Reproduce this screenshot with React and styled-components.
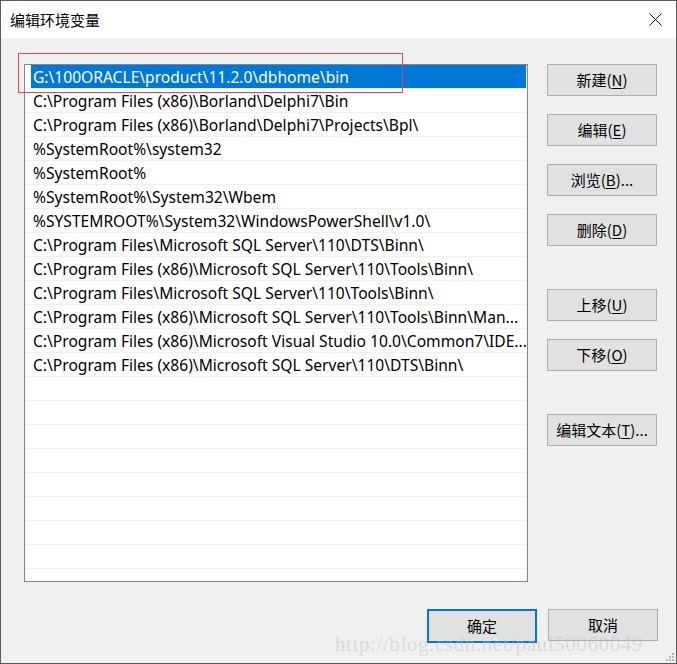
import React from 'react';
import styled, { createGlobalStyle } from 'styled-components';

const GlobalStyle = createGlobalStyle`
  html, body {
    margin: 0;
    padding: 0;
    background: #ffffff;
  }
  body {
    font-family: "Noto Sans", "Noto Sans CJK SC", sans-serif;
  }
`;

const Window = styled.div`
  position: relative;
  box-sizing: border-box;
  width: 677px;
  height: 664px;
  border: 1px solid #5b5b5b;
  background: #f0f0f0;
  display: flex;
  flex-direction: column;
  overflow: hidden;
`;

const TitleBar = styled.div`
  height: 37px;
  background: #ffffff;
  display: flex;
  align-items: center;
  justify-content: space-between;
  padding: 0 14px 0 9px;
`;

const Title = styled.span`
  font-family: "Noto Sans CJK SC", sans-serif;
  font-size: 15px;
  color: #000;
`;

const CloseIcon = styled.svg`
  width: 13px;
  height: 13px;
`;

const Body = styled.div`
  flex: 1;
  display: flex;
  flex-direction: column;
  padding: 26px 18px 0 23px;
`;

const Main = styled.div`
  display: flex;
  gap: 19px;
`;

const ListBox = styled.div`
  box-sizing: border-box;
  width: 504px;
  height: 518px;
  background: #fff;
  border: 1px solid #828790;
  overflow: hidden;
  padding-left: 1px;
`;

const Row = styled.div`
  box-sizing: border-box;
  height: 24px;
  border-bottom: 1px solid #f0f0f0;
  display: flex;
  align-items: center;
`;

const RowText = styled.div`
  flex: 1;
  height: 23px;
  margin: 0 1px 0 5px;
  padding-left: 2px;
  display: flex;
  align-items: center;
  font-size: 15.6px;
  white-space: nowrap;
  overflow: hidden;
  color: ${(p) => (p.$selected ? '#fff' : '#000')};
  background: ${(p) => (p.$selected ? '#0078d7' : 'transparent')};
`;

const ButtonColumn = styled.div`
  display: flex;
  flex-direction: column;
`;

const Button = styled.button`
  box-sizing: border-box;
  width: 110px;
  height: ${(p) => (p.$default ? '34px' : '32px')};
  margin-top: ${(p) => p.$top || 0}px;
  background: #e1e1e1;
  border: ${(p) => (p.$default ? '2px solid #0078d7' : '1px solid #adadad')};
  font-family: "Noto Sans CJK SC", sans-serif;
  font-size: 15px;
  color: #000;
  padding: 0 0 2px;
  display: flex;
  align-items: center;
  justify-content: center;
`;

const Key = styled.span`
  text-decoration: underline;
  text-underline-offset: 2px;
`;

const Footer = styled.div`
  display: flex;
  justify-content: flex-end;
  gap: 11px;
  margin-top: 27px;
`;

const RedMark = styled.div`
  position: absolute;
  left: 17px;
  top: 52px;
  width: 385px;
  height: 40px;
  border: 1px solid #e0475a;
  box-sizing: border-box;
  pointer-events: none;
`;

const Watermark = styled.div`
  position: absolute;
  left: 334px;
  top: 631px;
  font-family: "Liberation Serif", serif;
  font-size: 21px;
  letter-spacing: 0.6px;
  color: rgba(190, 190, 190, 0.45);
  pointer-events: none;
`;

const Grip = styled.svg`
  position: absolute;
  right: 2px;
  bottom: 2px;
  width: 10px;
  height: 10px;
`;

const paths = [
  'G:\\100ORACLE\\product\\11.2.0\\dbhome\\bin',
  'C:\\Program Files (x86)\\Borland\\Delphi7\\Bin',
  'C:\\Program Files (x86)\\Borland\\Delphi7\\Projects\\Bpl\\',
  '%SystemRoot%\\system32',
  '%SystemRoot%',
  '%SystemRoot%\\System32\\Wbem',
  '%SYSTEMROOT%\\System32\\WindowsPowerShell\\v1.0\\',
  'C:\\Program Files\\Microsoft SQL Server\\110\\DTS\\Binn\\',
  'C:\\Program Files (x86)\\Microsoft SQL Server\\110\\Tools\\Binn\\',
  'C:\\Program Files\\Microsoft SQL Server\\110\\Tools\\Binn\\',
  'C:\\Program Files (x86)\\Microsoft SQL Server\\110\\Tools\\Binn\\Man...',
  'C:\\Program Files (x86)\\Microsoft Visual Studio 10.0\\Common7\\IDE...',
  'C:\\Program Files (x86)\\Microsoft SQL Server\\110\\DTS\\Binn\\',
];

const rows = [...paths, ...Array(9).fill('')];

const sideButtons = [
  { label: '新建', key: 'N', top: 0 },
  { label: '编辑', key: 'E', top: 18 },
  { label: '浏览', key: 'B', top: 18, dots: true },
  { label: '删除', key: 'D', top: 18 },
  { label: '上移', key: 'U', top: 43 },
  { label: '下移', key: 'O', top: 18 },
  { label: '编辑文本', key: 'T', top: 43, dots: true },
];

export default function App() {
  return (
    <>
      <GlobalStyle />
      <Window>
        <TitleBar>
          <Title>编辑环境变量</Title>
          <CloseIcon viewBox="0 0 13 13">
            <path d="M0.5 0.5 L12.5 12.5 M12.5 0.5 L0.5 12.5" stroke="#111" strokeWidth="1" />
          </CloseIcon>
        </TitleBar>
        <Body>
          <Main>
            <ListBox>
              {rows.map((text, i) => (
                <Row key={i}>
                  <RowText $selected={i === 0}>{text}</RowText>
                </Row>
              ))}
            </ListBox>
            <ButtonColumn>
              {sideButtons.map((b) => (
                <Button key={b.key} $top={b.top}>
                  {b.label}(<Key>{b.key}</Key>){b.dots ? '...' : ''}
                </Button>
              ))}
            </ButtonColumn>
          </Main>
          <Footer>
            <Button $default>确定</Button>
            <Button>取消</Button>
          </Footer>
        </Body>
        <RedMark />
        <Watermark>http://blog.csdn.net/paul50060049</Watermark>
        <Grip viewBox="0 0 10 10">
          <rect x="8" y="2" width="2" height="2" fill="#b8b8b8" />
          <rect x="5" y="5" width="2" height="2" fill="#b8b8b8" />
          <rect x="8" y="5" width="2" height="2" fill="#b8b8b8" />
          <rect x="2" y="8" width="2" height="2" fill="#b8b8b8" />
          <rect x="5" y="8" width="2" height="2" fill="#b8b8b8" />
          <rect x="8" y="8" width="2" height="2" fill="#b8b8b8" />
        </Grip>
      </Window>
    </>
  );
}
